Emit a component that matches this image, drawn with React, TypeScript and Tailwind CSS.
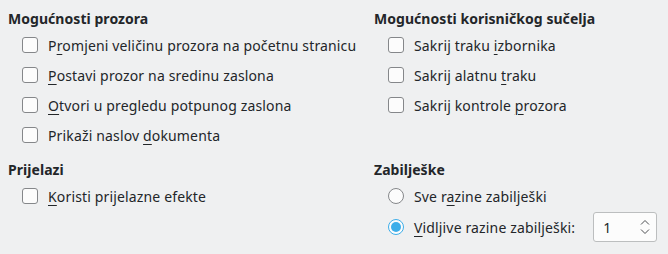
import type { ReactNode } from "react";

const font = { fontFamily: '"Noto Sans", "DejaVu Sans", sans-serif' };

function U({ children }: { children: ReactNode }) {
  return <span className="underline underline-offset-[3px] decoration-1">{children}</span>;
}

function Check({ children }: { children: ReactNode }) {
  return (
    <div className="flex h-[30px] items-center pl-[14px]">
      <span className="h-4 w-4 shrink-0 rounded-[3px] border border-[#85878a] bg-[#fcfcfc]" />
      <span className="ml-[10px] whitespace-nowrap">{children}</span>
    </div>
  );
}

function Radio({ checked, children }: { checked?: boolean; children: ReactNode }) {
  return (
    <div className="flex items-center pl-[14px]">
      {checked ? (
        <span className="grid h-4 w-4 shrink-0 place-items-center rounded-full border border-[#3daee9] bg-[#fcfcfc]">
          <span className="h-[10px] w-[10px] rounded-full bg-[#3daee9]" />
        </span>
      ) : (
        <span className="h-4 w-4 shrink-0 rounded-full border border-[#85878a] bg-[#fcfcfc]" />
      )}
      <span className="ml-[10px] whitespace-nowrap">{children}</span>
    </div>
  );
}

function Heading({ children }: { children: ReactNode }) {
  return <div className="flex h-6 items-center font-bold tracking-[0.05px]">{children}</div>;
}

export default function App() {
  return (
    <div
      className="h-[254px] w-[668px] overflow-hidden bg-[#eff0f1] pl-[8px] pt-[6px] text-[14px] tracking-[0.15px] text-[#232629]"
      style={font}
    >
      <div className="grid grid-cols-[366px_1fr]">
        <div>
          <Heading>Mogućnosti prozora</Heading>
          <Check>
            P<U>r</U>omjeni veličinu prozora na početnu stranicu
          </Check>
          <Check>
            <U>P</U>ostavi prozor na sredinu zaslona
          </Check>
          <Check>
            <U>O</U>tvori u pregledu potpunog zaslona
          </Check>
          <Check>
            Prikaži naslov <U>d</U>okumenta
          </Check>
        </div>
        <div>
          <Heading>Mogućnosti korisničkog sučelja</Heading>
          <Check>
            Sakrij traku <U>i</U>zbornika
          </Check>
          <Check>
            Sakrij alatnu <U>t</U>raku
          </Check>
          <Check>
            Sakrij kontrole <U>p</U>rozora
          </Check>
        </div>
      </div>
      <div className="mt-[7px] grid grid-cols-[366px_1fr]">
        <div>
          <Heading>Prijelazi</Heading>
          <Check>
            <U>K</U>oristi prijelazne efekte
          </Check>
        </div>
        <div>
          <Heading>Zabilješke</Heading>
          <div className="flex h-[30px] items-center">
            <Radio>
              Sve r<U>a</U>zine zabilješki
            </Radio>
          </div>
          <div className="flex h-[32px] items-center">
            <Radio checked>
              <U>V</U>idljive razine zabilješki:
            </Radio>
            <div className="ml-[18px] flex h-[30px] w-[64px] items-center justify-between rounded-[3px] border border-[#bcbebf] bg-[#fcfcfc] pl-[9px] pr-[6px]">
              <span>1</span>
              <svg width="10" height="18" viewBox="0 0 10 18" fill="none" stroke="#4d4f52" strokeWidth="1">
                <path d="M1 6.5 L5 2.5 L9 6.5" />
                <path d="M1 11.5 L5 15.5 L9 11.5" />
              </svg>
            </div>
          </div>
        </div>
      </div>
    </div>
  );
}
